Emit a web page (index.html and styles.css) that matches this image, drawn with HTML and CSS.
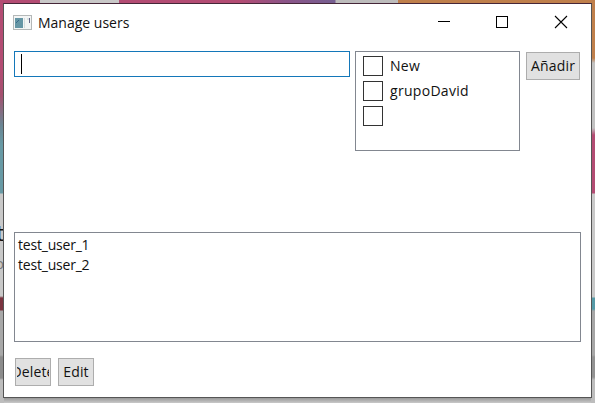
FILE: index.html
```
<!DOCTYPE html>
<html lang="en">
<head>
<meta charset="utf-8">
<title>Manage users</title>
<link rel="stylesheet" href="styles.css">
</head>
<body>
<div class="peek peek-t" aria-hidden="true">t</div>
<div class="peek peek-o" aria-hidden="true">o</div>
<main class="window">
  <header class="titlebar">
    <svg class="app-icon" width="19" height="16" viewBox="0 0 19 16">
      <rect x=".5" y=".5" width="18" height="14" fill="#f3f5f5" stroke="#b4b8b8"/>
      <rect x="2" y="3" width="8" height="10" fill="#6596a5"/>
      <path d="M3 8l3-3" stroke="#396a8a" fill="none"/>
      <path d="M11.5 3v10" stroke="#d5dddd"/>
      <path d="M16.5 3v5" stroke="#668"/>
      <path d="M14 4h2" stroke="#bcc"/>
    </svg>
    <h1 class="title"><span>Manage users</span></h1>
    <svg class="controls" width="132" height="14" viewBox="0 0 132 14" fill="none" stroke="#000">
      <path d="M1 6.5h12"/>
      <rect x="59.5" y="1.5" width="11" height="11"/>
      <path d="M118 1l12 12M130 1l-12 12" stroke-width="1.1"/>
    </svg>
  </header>
  <section class="form">
    <div class="field"><span class="caret"></span></div>
    <ul class="groups">
      <li><span class="box"></span><span>New</span></li>
      <li><span class="box"></span><span>grupoDavid</span></li>
      <li><span class="box"></span></li>
    </ul>
    <button class="btn add"><span>Añadir</span></button>
  </section>
  <ul class="users">
    <li>test_user_1</li>
    <li>test_user_2</li>
  </ul>
  <footer class="actions">
    <button class="btn"><span class="clip"><span class="delete">Delete</span></span></button>
    <button class="btn"><span>Edit</span></button>
  </footer>
</main>
</body>
</html>
```
FILE: styles.css
```
* { box-sizing: border-box; }
html, body { margin: 0; height: 100%; overflow: hidden; }
body {
  padding: 3px 3px 5px;
  font: 14px/20px "Open Sans", "Noto Sans", sans-serif;
  color: #111;
  background:
    linear-gradient(90deg, #b34c73 0 40px, #c9c8c8 40px 119px, #b34c73 119px 240px, #8b5488 285px, #755f91 335px, #bdbcbc 336px 398px, #bf7f4b 398px) 0 0 / 100% 4px no-repeat,
    linear-gradient(#b34c73 0 70px, #a4506f 95px, #6b8593 125px, #689aa5 145px 193px, #c9c9c9 194px 296px, #7b3440 298px 310px, #a8a8a8 311px 355px, #8c8c8c 357px 378px, #bdbdbd 380px) 0 0 / 4px 100% no-repeat,
    linear-gradient(#bf7f4b 0 58px, #c1c1c1 63px 128px, #b34c73 135px 193px, #c9c9c9 194px 297px, #559aa7 298px 309px, #a6a6a6 311px 355px, #929292 357px 377px, #bdbdbd 380px) 100% 0 / 4px 100% no-repeat,
    linear-gradient(#999 398px, #c9c9c9 403px);
}
.peek { position: absolute; width: 4px; overflow: hidden; direction: rtl; }
.peek-t { left: 0; top: 223px; font-size: 21px; color: #111; }
.peek-o { left: 0; top: 254px; font-size: 14px; color: #777; }
.window {
  position: relative;
  display: flex;
  flex-direction: column;
  width: 589px;
  height: 395px;
  border: 1px solid #555;
  border-top-color: #452638;
  background: #fff;
  padding: 0 10px;
}
.titlebar { display: flex; align-items: center; height: 37px; flex: none; margin-bottom: 10px; }
.app-icon { margin: 0 6px 0 -1px; }
.title { margin: 0; font: inherit; letter-spacing: 0; }
.controls { margin: 0 12px 2px auto; }
.form { display: flex; align-items: flex-start; height: 181px; flex: none; }
.field { width: 336px; height: 26px; border: 1px solid #1477b9; padding: 2px 6px; margin-right: 5px; }
.caret { display: block; width: 1px; height: 20px; background: #000; }
ul { margin: 0; padding: 0; list-style: none; border: 1px solid #828790; }
.groups { width: 165px; height: 100px; padding: 4px 7px; margin-right: 6px; letter-spacing: .3px; }
.groups li { display: flex; gap: 7px; height: 25px; }
.box { width: 20px; height: 20px; border: 1px solid #333; }
.btn {
  display: flex;
  justify-content: center;
  align-items: center;
  width: 36px;
  height: 28px;
  margin: 0;
  padding: 0;
  border: 1px solid #adadad;
  background: #e1e1e1;
  color: #111;
  font: inherit;
  letter-spacing: .1px;
}
.add { width: 54px; margin-top: 1px; letter-spacing: .2px; }
.users { width: 567px; height: 110px; flex: none; padding: 2px 3px; letter-spacing: -.2px; }
.actions { display: flex; gap: 7px; padding: 16px 0 0 1px; }
.clip { display: flex; justify-content: center; width: 32px; overflow: hidden; }
.delete { flex: none; }
```
